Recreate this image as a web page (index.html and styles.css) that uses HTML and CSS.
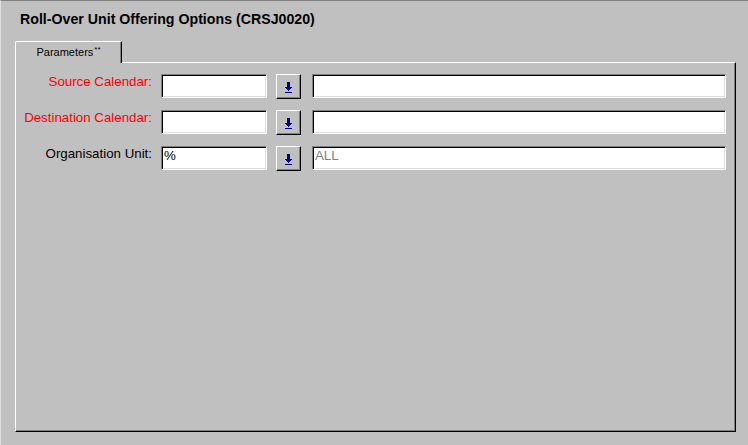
FILE: index.html
```html
<!DOCTYPE html>
<html>
<head>
<meta charset="utf-8">
<link rel="stylesheet" href="styles.css">
</head>
<body>
<div class="window">
  <h1 class="title">Roll-Over Unit Offering Options (CRSJ0020)</h1>
  <div class="tabs">
    <div class="tab">Parameters<sup>**</sup></div>
  </div>
  <div class="panel">
    <div class="row">
      <div class="lbl req">Source Calendar:</div>
      <div class="field code"></div>
      <div class="lov"><svg class="ico" width="7" height="11" viewBox="0 0 7 11" shape-rendering="crispEdges"><rect x="2" y="0" width="3" height="5" fill="#000080"/><rect x="0" y="5" width="7" height="1" fill="#000080"/><rect x="1" y="6" width="5" height="1" fill="#000080"/><rect x="2" y="7" width="3" height="1" fill="#000080"/><rect x="3" y="8" width="1" height="1" fill="#000080"/><rect x="0" y="10" width="7" height="1" fill="#000080"/></svg></div>
      <div class="field desc"></div>
    </div>
    <div class="row">
      <div class="lbl req">Destination Calendar:</div>
      <div class="field code"></div>
      <div class="lov"><svg class="ico" width="7" height="11" viewBox="0 0 7 11" shape-rendering="crispEdges"><rect x="2" y="0" width="3" height="5" fill="#000080"/><rect x="0" y="5" width="7" height="1" fill="#000080"/><rect x="1" y="6" width="5" height="1" fill="#000080"/><rect x="2" y="7" width="3" height="1" fill="#000080"/><rect x="3" y="8" width="1" height="1" fill="#000080"/><rect x="0" y="10" width="7" height="1" fill="#000080"/></svg></div>
      <div class="field desc"></div>
    </div>
    <div class="row">
      <div class="lbl">Organisation Unit:</div>
      <div class="field code">%</div>
      <div class="lov"><svg class="ico" width="7" height="11" viewBox="0 0 7 11" shape-rendering="crispEdges"><rect x="2" y="0" width="3" height="5" fill="#000080"/><rect x="0" y="5" width="7" height="1" fill="#000080"/><rect x="1" y="6" width="5" height="1" fill="#000080"/><rect x="2" y="7" width="3" height="1" fill="#000080"/><rect x="3" y="8" width="1" height="1" fill="#000080"/><rect x="0" y="10" width="7" height="1" fill="#000080"/></svg></div>
      <div class="field desc muted">ALL</div>
    </div>
  </div>
</div>
</body>
</html>
```

FILE: styles.css
```css
html, body {
  margin: 0;
  padding: 0;
  background: #c0c0c0;
}

.window {
  width: 748px;
  height: 445px;
  box-sizing: border-box;
  border-top: 1px solid #808080;
  border-left: 1px solid #dfdfdf;
  background: #c0c0c0;
  display: flex;
  flex-direction: column;
  padding-top: 10px;
  font-family: "Liberation Sans", Arial, sans-serif;
  overflow: hidden;
}

.title {
  margin: 0 0 0 19px;
  font-size: 14.2px;
  line-height: 16px;
  font-weight: bold;
  color: #000;
}

.tabs {
  display: flex;
  margin-top: 14px;
  margin-left: 14px;
  position: relative;
  z-index: 1;
  margin-bottom: -1px;
}

.tab {
  width: 107px;
  height: 22px;
  box-sizing: border-box;
  border-top: 1px solid #fff;
  border-left: 1px solid #fff;
  border-right: 1px solid #000;
  border-top-left-radius: 2px;
  box-shadow: inset -1px 0 0 #808080;
  background: #c0c0c0;
  font-size: 11px;
  line-height: 13px;
  color: #000;
  display: flex;
  justify-content: center;
  padding-top: 4px;
}

.tab sup {
  font-size: 8px;
  line-height: 8px;
  vertical-align: top;
  margin-left: 1px;
}

.panel {
  margin-left: 14px;
  width: 721px;
  height: 370px;
  box-sizing: border-box;
  border-top: 1px solid #fff;
  border-left: 1px solid #fff;
  border-right: 1px solid #000;
  border-bottom: 1px solid #000;
  box-shadow: inset -1px -1px 0 #808080;
  padding-top: 11px;
  display: flex;
  flex-direction: column;
  gap: 11px;
}

.row {
  display: flex;
  align-items: flex-start;
  height: 25px;
}

.lbl {
  width: 136px;
  text-align: right;
  font-size: 13.3px;
  line-height: 16px;
  color: #000;
  white-space: nowrap;
}

.lbl.req {
  color: #ff0000;
}

.field {
  height: 24px;
  box-sizing: border-box;
  background: #fff;
  border: 1px solid;
  border-color: #808080 #fff #fff #808080;
  box-shadow: inset 1px 1px 0 #000, inset -1px -1px 0 #dfdfdf;
  padding: 1px 2px 0 2px;
  font-size: 13.3px;
  line-height: 16px;
  color: #000;
}

.code {
  width: 106px;
  margin-left: 9px;
}

.desc {
  width: 414px;
  margin-left: 11px;
  padding-left: 2px;
}

.muted {
  color: #808080;
}

.lov {
  width: 25px;
  height: 25px;
  box-sizing: border-box;
  margin-left: 9px;
  background: #c0c0c0;
  border: 1px solid;
  border-color: #fff #000 #000 #fff;
  box-shadow: inset -1px -1px 0 #808080;
  display: flex;
  justify-content: center;
  align-items: flex-start;
  padding-top: 7px;
}

.ico {
  display: block;
}
```
